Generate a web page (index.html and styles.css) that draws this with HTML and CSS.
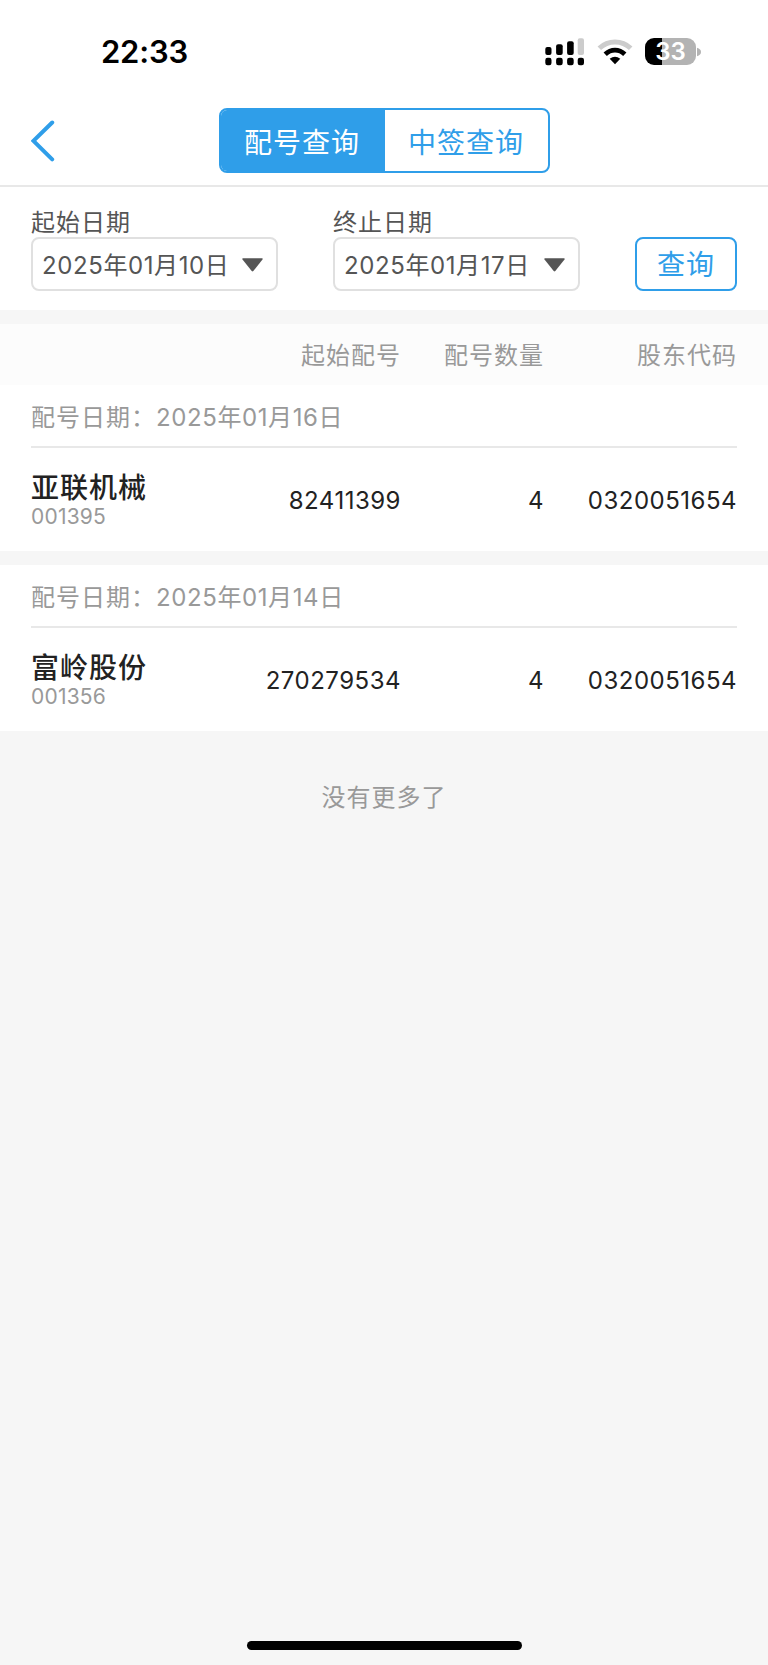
FILE: index.html
```html
<!DOCTYPE html>
<html lang="zh-CN">
<head>
    <meta charset="UTF-8">
    <meta name="viewport" content="width=device-width, initial-scale=1.0">
    <title>配号查询</title>
    <link rel="stylesheet" href="styles.css">
</head>
<body>
    <div class="page">
        <div class="status-bar">
            <span class="time">22:33</span>
            <div class="status-icons">
                <svg class="signal" width="40" height="28" viewBox="0 0 40 28">
                    <rect x="0.3" y="9" width="6.2" height="8" rx="2"/>
                    <rect x="11.1" y="6.2" width="6.6" height="10.8" rx="2"/>
                    <rect x="22.1" y="3.2" width="6.6" height="13.8" rx="2"/>
                    <rect x="32.7" y="0.2" width="6.3" height="16.8" rx="2" fill="#cccccc"/>
                    <rect x="0.3" y="19.8" width="6.2" height="7.4" rx="2.2"/>
                    <rect x="11.1" y="19.8" width="6.6" height="7.4" rx="2.2"/>
                    <rect x="22.1" y="19.8" width="6.6" height="7.4" rx="2.2"/>
                    <rect x="32.7" y="19.8" width="6.3" height="7.4" rx="2.2"/>
                </svg>
                <svg class="wifi" width="36" height="28" viewBox="0 0 36 28" fill="none">
                    <path d="M2.3 10.2 C11 1.8 25 1.8 33.7 10.2" stroke="#cccccc" stroke-width="5"/>
                    <path d="M8.2 16.2 C14 10.8 22 10.8 27.8 16.2" stroke="#000" stroke-width="4.8"/>
                    <path d="M12.7 20.8 Q18 16.6 23.3 20.8 L18 26.2Z" fill="#000"/>
                </svg>
                <div class="battery">
                    <span class="battery-level">33</span>
                    <svg width="5" height="10" viewBox="0 0 5 10"><path d="M0 0.8 Q4 2 4 5 T0 9.2Z" fill="#b3b3b3"/></svg>
                </div>
            </div>
        </div>

        <div class="header">
            <svg class="back" width="24" height="42" viewBox="0 0 24 42" fill="none">
                <path d="M21.2 2.5 L2.5 20.8 L21.2 39.3" stroke="#2f9ee9" stroke-width="4" stroke-linecap="round"/>
            </svg>
            <div class="tabs">
                <div class="tab active">配号查询</div>
                <div class="tab">中签查询</div>
            </div>
        </div>

        <div class="filter">
            <div class="field">
                <label>起始日期</label>
                <div class="select">
                    <span class="date">2025年01月10日</span>
                    <svg class="arrow" width="21" height="14" viewBox="0 0 21 14"><path d="M0.8 0.3H20.2Q21 0.8 20.5 1.6L11.3 13Q10.5 13.8 9.7 13L0.5 1.6Q0 0.8 0.8 0.3Z" fill="#555"/></svg>
                </div>
            </div>
            <div class="field">
                <label>终止日期</label>
                <div class="select">
                    <span class="date">2025年01月17日</span>
                    <svg class="arrow" width="21" height="14" viewBox="0 0 21 14"><path d="M0.8 0.3H20.2Q21 0.8 20.5 1.6L11.3 13Q10.5 13.8 9.7 13L0.5 1.6Q0 0.8 0.8 0.3Z" fill="#555"/></svg>
                </div>
            </div>
            <button class="query-button">查询</button>
        </div>

        <div class="row table-head">
            <span></span>
            <span>起始配号</span>
            <span>配号数量</span>
            <span>股东代码</span>
        </div>

        <div class="group">
            <div class="group-date">配号日期：<span class="date">2025年01月16日</span></div>
            <div class="row">
                <div class="stock">
                    <div class="stock-name">亚联机械</div>
                    <div class="stock-code">001395</div>
                </div>
                <span>82411399</span>
                <span>4</span>
                <span>0320051654</span>
            </div>
        </div>

        <div class="group">
            <div class="group-date">配号日期：<span class="date">2025年01月14日</span></div>
            <div class="row">
                <div class="stock">
                    <div class="stock-name">富岭股份</div>
                    <div class="stock-code">001356</div>
                </div>
                <span>270279534</span>
                <span>4</span>
                <span>0320051654</span>
            </div>
        </div>

        <div class="no-more">没有更多了</div>
        <div class="home-bar"></div>
    </div>
</body>
</html>
```
FILE: styles.css
```css
* {
    box-sizing: border-box;
}

body {
    margin: 0;
    font-family: Inter, "Noto Sans CJK SC", sans-serif;
    font-size: 24px;
    font-weight: 400;
    letter-spacing: 1px;
    color: #222;
    background-color: #f6f6f6;
}

svg {
    display: block;
    flex-shrink: 0;
}

.page {
    height: 1665px;
    display: flex;
    flex-direction: column;
}

/* Barra de status */
.status-bar {
    height: 100px;
    padding: 3px 66px 0 101px;
    display: flex;
    align-items: center;
    justify-content: space-between;
    background-color: #fff;
    letter-spacing: 0;
}

.time {
    font-size: 31px;
    font-weight: 600;
    letter-spacing: -0.2px;
    color: #000;
}

.status-icons {
    display: flex;
    align-items: center;
    gap: 12px;
}

.battery {
    display: flex;
    align-items: center;
    gap: 1px;
}

.battery-level {
    width: 51px;
    height: 27px;
    border-radius: 9px;
    background: linear-gradient(to right, #000 33%, #b3b3b3 33%);
    color: #fff;
    font-size: 24px;
    font-weight: 600;
    line-height: 27px;
    text-align: center;
}

/* Header */
.header {
    height: 87px;
    padding: 8px 31px 0;
    display: grid;
    grid-template-columns: 1fr 331px 1fr;
    align-items: start;
    background-color: #fff;
    border-bottom: 2px solid #e8e8e8;
}

.back {
    margin-top: 12px;
}

.tabs {
    height: 65px;
    display: flex;
    border: 2px solid #2f9ee9;
    border-radius: 8px;
    overflow: hidden;
}

.tab {
    flex: 1;
    padding-top: 3px;
    font-size: 28px;
    line-height: 60px;
    text-align: center;
    color: #2f9ee9;
}

.tab.active {
    padding-right: 1px;
    background-color: #2f9ee9;
    color: #fff;
}

/* Filter */
.filter {
    height: 123px;
    padding: 20px 31px 0;
    display: flex;
    justify-content: space-between;
    align-items: flex-start;
    background-color: #fff;
}

.field {
    width: 247px;
    color: #555;
}

.field label {
    display: block;
    height: 30px;
    line-height: 31px;
}

.select {
    height: 54px;
    padding: 0 13px 2px 9px;
    display: flex;
    align-items: center;
    justify-content: space-between;
    border: 2px solid #e0e0e0;
    border-radius: 8px;
    white-space: nowrap;
}

.arrow {
    margin-top: 3px;
}

.date {
    letter-spacing: 0.6px;
}

.query-button {
    width: 102px;
    height: 54px;
    margin-top: 30px;
    padding: 3px 0 0;
    border: 2px solid #2f9ee9;
    border-radius: 8px;
    background-color: #fff;
    color: #2f9ee9;
    font-family: inherit;
    font-size: 28px;
    letter-spacing: 1px;
    line-height: 47px;
}

/* Table */
.row {
    display: grid;
    grid-template-columns: 200px 170px 143px 193px;
    align-items: center;
    text-align: right;
    letter-spacing: 0.5px;
}

.table-head {
    height: 61px;
    margin-top: 14px;
    padding: 0 31px 3px;
    background-color: #fcfcfc;
    color: #999;
    letter-spacing: 1px;
}

.group {
    height: 166px;
    padding: 0 31px;
    background-color: #fff;
}

.group + .group {
    margin-top: 14px;
}

.group-date {
    height: 63px;
    padding-top: 2px;
    line-height: 61px;
    border-bottom: 2px solid #e8e8e8;
    color: #999;
}

.group .row {
    height: 103px;
    padding-top: 1px;
}

.stock {
    text-align: left;
}

.stock-name {
    font-size: 28px;
    font-weight: 500;
    letter-spacing: 1px;
    line-height: 34px;
}

.stock-code {
    font-size: 21px;
    line-height: 24px;
    letter-spacing: 0.2px;
    color: #999;
}

.no-more {
    margin-top: 48px;
    line-height: 37px;
    text-align: center;
    color: #999;
}

.home-bar {
    width: 275px;
    height: 9px;
    margin: auto auto 15px;
    border-radius: 5px;
    background-color: #000;
}
```
